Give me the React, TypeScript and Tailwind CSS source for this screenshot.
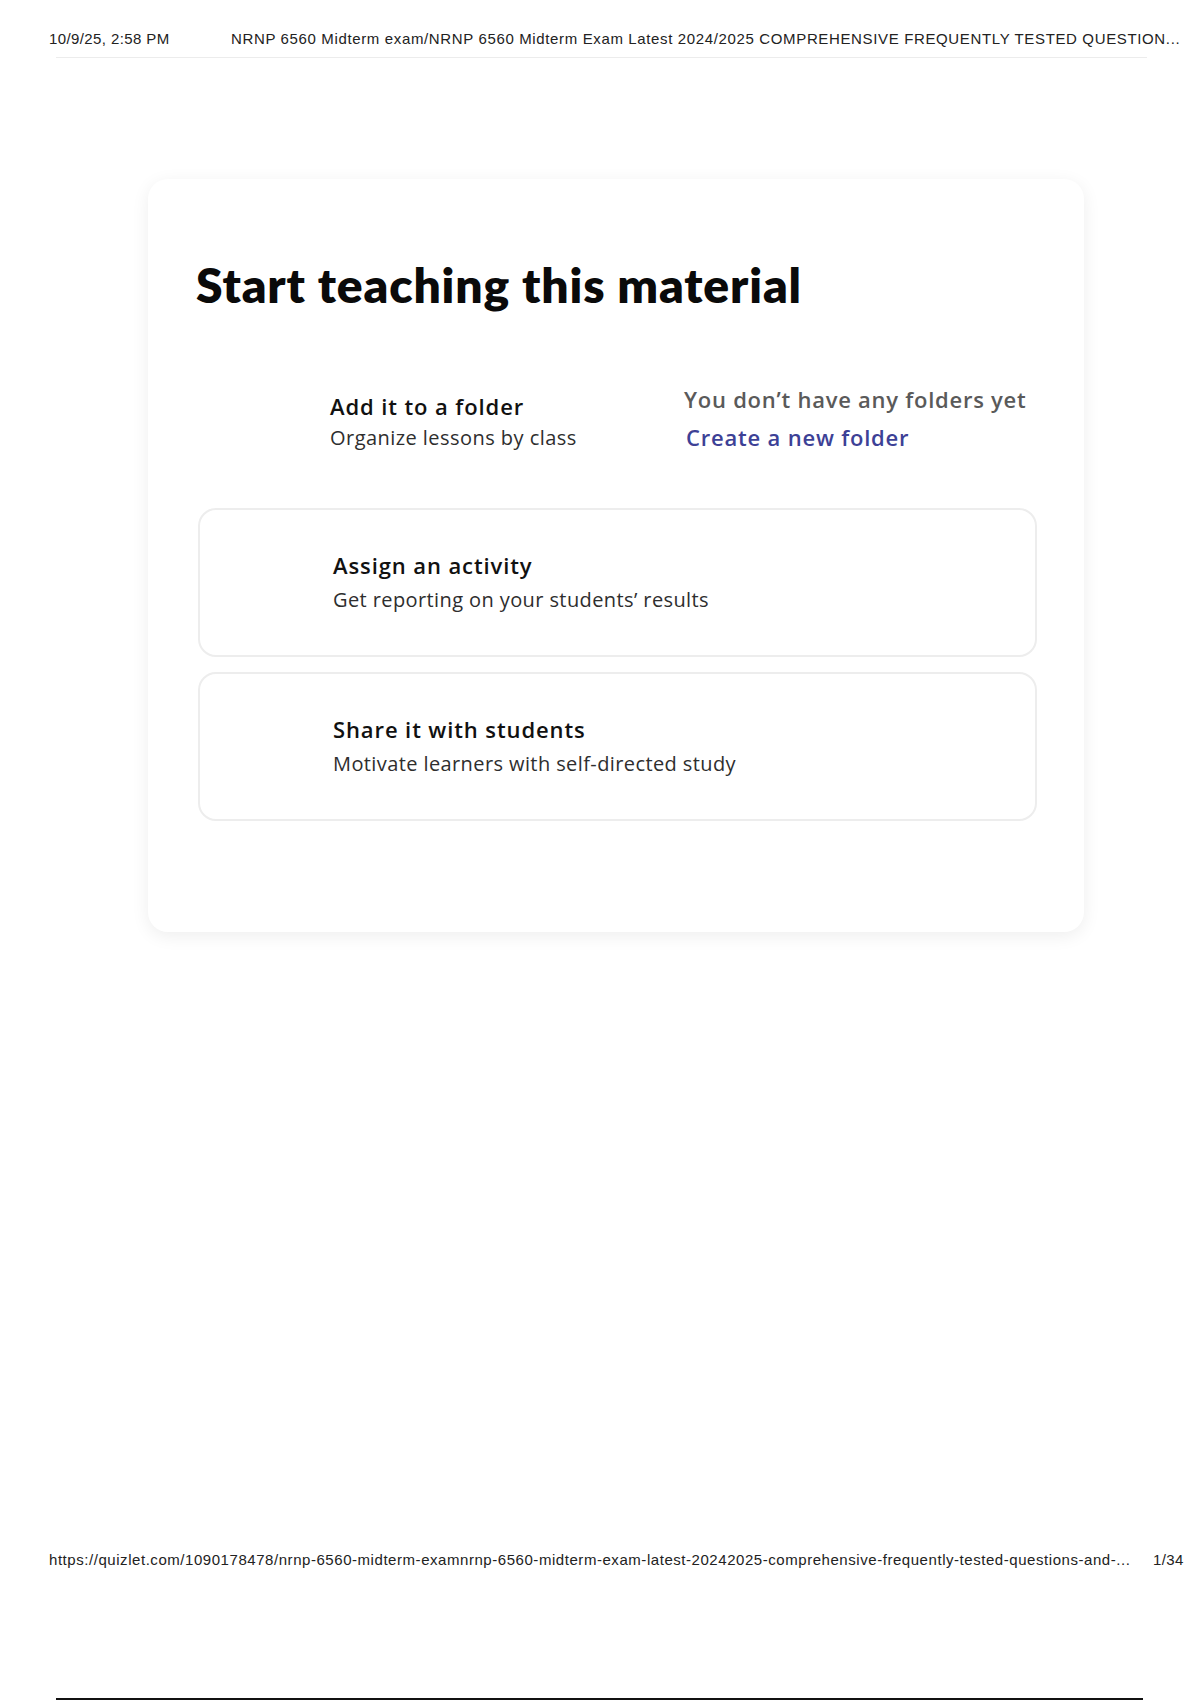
// Printed Quizlet page: "Start teaching this material" card between the
// browser print header and footer.

const rows = [
  { title: "Assign an activity", sub: "Get reporting on your students’ results" },
  { title: "Share it with students", sub: "Motivate learners with self-directed study" },
];

export default function App() {
  return (
    <div className="flex min-h-[1700px] w-[1200px] flex-col bg-white font-['Open_Sans',sans-serif] text-black">
      {/* print header */}
      <header className="font-['Liberation_Sans',Arial,sans-serif] text-[15px] leading-[18px] text-[#222]">
        <div className="flex pl-[49px] pt-[30px]">
          <span className="w-[182px] shrink-0 tracking-[0.4px]">10/9/25, 2:58 PM</span>
          <span className="whitespace-nowrap tracking-[0.64px]">
            NRNP 6560 Midterm exam/NRNP 6560 Midterm Exam Latest 2024/2025 COMPREHENSIVE FREQUENTLY TESTED QUESTION...
          </span>
        </div>
        <div className="ml-[56px] mr-[53px] mt-[9px] h-px bg-[#ececec]" />
      </header>

      {/* card */}
      <section className="ml-[148px] mt-[121px] w-[936px] rounded-[20px] bg-white pb-[111px] pl-[48px] pr-[48px] pt-[78px] shadow-[0_4px_18px_rgba(0,0,0,0.07)]">
        <h1 className="font-['Lato',sans-serif] text-[48px] font-extrabold leading-[56px] tracking-[0.85px] text-[#0a0a0a]">
          Start teaching this material
        </h1>

        <div className="mt-[79px] flex pl-[134px]">
          <div className="w-[354px]">
            <div className="text-[22px] font-semibold leading-[28px] tracking-[0.9px] text-[#111]">Add it to a folder</div>
            <div className="mt-[6px] text-[20px] leading-[24px] tracking-[0.45px] text-[#2e2e2e]">Organize lessons by class</div>
          </div>
          <div className="-mt-[7px]">
            <div className="text-[22px] font-semibold leading-[28px] tracking-[0.75px] text-[#5a5a5a]">You don’t have any folders yet</div>
            <div className="ml-[2px] mt-[10px] text-[22px] font-semibold leading-[28px] tracking-[0.8px] text-[#3d4196]">Create a new folder</div>
          </div>
        </div>

        <div className="ml-[2px] mt-[57px] flex w-[839px] flex-col gap-[15px]">
          {rows.map((r) => (
            <div
              key={r.title}
              className="h-[149px] rounded-[18px] border-2 border-[#ededed] pl-[133px] pt-[41px]"
            >
              <div className="text-[22px] font-semibold leading-[28px] tracking-[0.9px] text-[#111]">{r.title}</div>
              <div className="mt-[9px] text-[20px] leading-[24px] tracking-[0.4px] text-[#2e2e2e]">{r.sub}</div>
            </div>
          ))}
        </div>
      </section>

      {/* print footer */}
      <footer className="mt-auto font-['Liberation_Sans',Arial,sans-serif] text-[15px] leading-[18px] text-[#222]">
        <div className="flex pl-[49px]">
          <span className="w-[1104px] shrink-0 whitespace-nowrap tracking-[0.55px]">
            https://quizlet.com/1090178478/nrnp-6560-midterm-examnrnp-6560-midterm-exam-latest-20242025-comprehensive-frequently-tested-questions-and-...
          </span>
          <span className="tracking-[0.4px]">1/34</span>
        </div>
        <div className="ml-[56px] mt-[129px] h-[2px] w-[1087px] bg-[#111]" />
      </footer>
    </div>
  );
}
